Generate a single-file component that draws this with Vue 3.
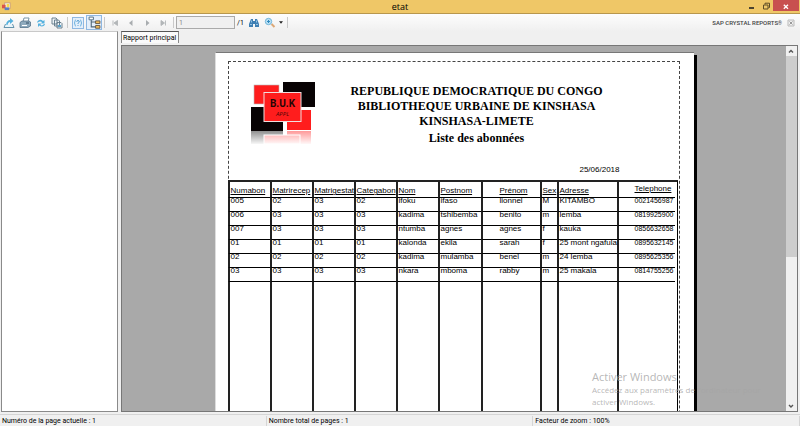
<script setup>
import { ref } from 'vue'

const page = ref('1')

const columns = [
  { key: 'numabon', label: 'Numabon', width: 42 },
  { key: 'matrirecep', label: 'Matrirecep', width: 42 },
  { key: 'matrigestat', label: 'Matrigestat', width: 42 },
  { key: 'categabon', label: 'Categabon', width: 42 },
  { key: 'nom', label: 'Nom', width: 42 },
  { key: 'postnom', label: 'Postnom', width: 43 },
  { key: 'prenom', label: 'Prénom', width: 59 },
  { key: 'sexe', label: 'Sex', width: 17 },
  { key: 'adresse', label: 'Adresse', width: 60 },
  { key: 'telephone', label: 'Telephone', width: 58 },
]

const rows = [
  ['005', '02', '03', '02', 'ifoku', 'ifaso', 'lionnel', 'M', 'KITAMBO', '0021456987'],
  ['006', '03', '03', '03', 'kadima', 'tshibemba', 'benito', 'm', 'lemba', '0819925900'],
  ['007', '03', '03', '03', 'ntumba', 'agnes', 'agnes', 'f', 'kauka', '0856632658'],
  ['01', '01', '01', '01', 'kalonda', 'ekila', 'sarah', 'f', '25 mont ngafula', '0895632145'],
  ['02', '02', '02', '02', 'kadima', 'mulamba', 'benel', 'm', '24 lemba', '0895625356'],
  ['03', '03', '03', '03', 'nkara', 'mboma', 'rabby', 'm', '25 makala', '0814755256'],
]
</script>

<template>
  <div class="window">
    <header class="titlebar">
      <svg class="app-icon" viewBox="0 0 10 10">
        <rect x="3" y="1" width="6" height="6" fill="#fff" stroke="#c79a7a" />
        <rect x="0" y="3" width="4" height="4" fill="#d9534a" />
        <rect x="5" y="2" width="3" height="4" fill="#f5d94e" />
        <rect x="3" y="6" width="5" height="3" fill="#5b7fc4" />
      </svg>
      <h1>etat</h1>
      <div class="controls">
        <button aria-label="Réduire"><svg viewBox="0 0 10 10"><path d="M3 7h5" stroke="#222" stroke-width="1.6" /></svg></button>
        <button aria-label="Restaurer"><svg viewBox="0 0 10 10"><path d="M2.5 4h4.5v4h-4.5zM4 3.500V2.200h4.500v4.300H7.500" fill="none" stroke="#5d4c26" /></svg></button>
        <button class="close" aria-label="Fermer"><svg viewBox="0 0 10 10"><path d="M2.800 3.800l4.200 4M7 3.800l-4.200 4" stroke="#fff" stroke-width="1.300" /></svg></button>
      </div>
    </header>

    <nav class="toolbar">
      <button aria-label="Exporter">
        <svg viewBox="0 0 12 12"><path d="M2.500 7L1 10.500h10L9.500 7" fill="#e8f4fa" stroke="#6594ad" /><path d="M3 7.500c.5-3 2-4.500 4-4.500V1l3.500 3L7 7V5C6 5 5 6 4.500 8z" fill="#55b1de" /></svg>
      </button>
      <button aria-label="Imprimer">
        <svg viewBox="0 0 12 12"><path d="M4 5l1-4h5L9 5" fill="#fff" stroke="#7894a6" /><path d="M1 5.500l2-1.500h7l1.500 1v4L9 10.500H1z" fill="#8faabd" stroke="#56748b" stroke-width=".8" /><path d="M3 8.500h5" stroke="#fff" /><path d="M7 6h3" stroke="#344e64" /></svg>
      </button>
      <button aria-label="Actualiser">
        <svg viewBox="0 0 12 12"><path d="M2 5.500C3 2.500 6 2 8 4l1.500-1v3.500H6L7 5C5.500 4 4 4.500 3 5.500zM10 7C9 10 6 10 4.500 8.500L3 10V6.500h3L5.500 8C7 9 8 8 9 7z" fill="#55b1de" /></svg>
      </button>
      <button aria-label="Copier">
        <svg viewBox="0 0 12 12"><path d="M1 1h4l1 1v5H1zM3.500 3h4l1 1v5h-5zM6 5.500h4l1 1V11H6z" fill="#edf3f6" stroke="#607787" stroke-width=".9" /><path d="M7 8h3v2H7z" fill="#5ca2c9" /></svg>
      </button>
      <span class="sep"></span>
      <button class="selected pale" aria-label="Paramètres">
        <svg viewBox="0 0 12 12"><path d="M3 2Q.5 6 3 10M9 2q2.500 4 0 8" fill="none" stroke="#58a6d7" /><path d="M4.500 4.500C4.500 2.500 7.500 2.500 7.500 4.500 7.500 5.500 6 5.500 6 7M6 8.500V9.500" fill="none" stroke="#378dc8" stroke-width="1.100" /></svg>
      </button>
      <button class="selected branch" aria-label="Arborescence du groupe">
        <svg viewBox="0 0 12 12"><path d="M3 3.500V10H7M3 5.500H7" fill="none" stroke="#4e6577" /><path d="M1 1h4v2.500H1z" fill="#fff" stroke="#55748a" stroke-width=".9" /><path d="M7 4.500h4V7H7zM7 8.800h4v2.500H7z" fill="#f5bd59" stroke="#685a48" stroke-width=".9" /></svg>
      </button>
      <span class="sep"></span>
      <button aria-label="Première page"><svg viewBox="0 0 12 12"><path d="M4 3.500v5M8.500 3.500v5L5 6z" fill="#b2b6b8" stroke="#b2b6b8" stroke-width=".9" /></svg></button>
      <button aria-label="Page précédente"><svg viewBox="0 0 12 12"><path d="M7.500 3v6L4 6z" fill="#a9adb0" /></svg></button>
      <button aria-label="Page suivante"><svg viewBox="0 0 12 12"><path d="M5 3v6l3.500-3z" fill="#a9adb0" /></svg></button>
      <button aria-label="Dernière page"><svg viewBox="0 0 12 12"><path d="M8.500 3.500v5M4 3.500v5L7.500 6z" fill="#b2b6b8" stroke="#b2b6b8" stroke-width=".9" /></svg></button>
      <span class="sep"></span>
      <input v-model="page" class="page-box" aria-label="Page" disabled />
      <span class="count">/1</span>
      <button aria-label="Rechercher">
        <svg viewBox="0 0 12 12"><path d="M3 2h2v2h2V2h2l2 5v3H7V7H5v3H1V7z" fill="#3f7fb3" /><path d="M2 7.500h2M8 7.500h2M3.500 3.500v2M8.500 3.500v2" stroke="#91c3e4" /></svg>
      </button>
      <button class="zoom" aria-label="Zoom">
        <svg viewBox="0 0 12 12"><path d="M7.500 7l3 3" stroke="#dba877" stroke-width="2" /><circle cx="4.500" cy="4.500" r="3.200" fill="#b9e0f4" stroke="#74b6da" /><path d="M3 4.500h3M4.500 3v3" stroke="#318bc0" /></svg>
        <svg class="caret" viewBox="0 0 5 3"><path d="M0 0h5L2.500 3z" fill="#222" /></svg>
      </button>
      <span class="sep"></span>
      <span class="brand">SAP CRYSTAL REPORTS<small>®</small></span>
      <button aria-label="Fermer la vue"><svg viewBox="0 0 12 12"><path d="M3 3h6v6H3z" fill="#eee" stroke="#bbb" /><path d="M4.500 4.500l3 3M7.500 4.500l-3 3" stroke="#999" /></svg></button>
    </nav>

    <main class="body">
      <aside class="tree"></aside>
      <section class="viewer">
        <div class="tabs"><button class="tab">Rapport principal</button></div>
        <div class="canvas">
          <div class="desk">
            <article class="sheet">
              <div class="frame">
                <div class="report-head">
                  <svg class="logo" viewBox="0 0 66 66">
                    <defs>
                      <linearGradient id="fade" x1="0" y1="0" x2="0" y2="1">
                        <stop offset="0" stop-color="#fff" stop-opacity=".5" />
                        <stop offset="1" stop-color="#fff" />
                      </linearGradient>
                    </defs>
                    <rect x="4" y="4" width="25" height="19" fill="#ff1d1d" stroke="#bbb" stroke-width=".6" />
                    <rect x="33" y="1" width="32" height="25" fill="#080304" />
                    <rect x="1" y="26" width="32" height="24" fill="#080304" />
                    <rect x="37" y="29" width="24" height="20" fill="#ff1d1d" />
                    <rect x="1" y="50" width="32" height="13" fill="#222" />
                    <rect x="37" y="50" width="24" height="13" fill="#ff3434" />
                    <rect x="14" y="54" width="36" height="9" fill="#ff4848" stroke="#fff" />
                    <rect x="0" y="50" width="66" height="14" fill="url(#fade)" />
                    <rect x="14" y="11.500" width="37" height="29" fill="#ff1d1d" stroke="#f1dede" />
                    <text x="32.500" y="26" class="logo-name">B.U.K</text>
                    <text x="32.500" y="35" class="logo-sub">APPL</text>
                  </svg>
                  <div class="titles">
                    <h2>REPUBLIQUE DEMOCRATIQUE DU CONGO<br />BIBLIOTHEQUE URBAINE DE KINSHASA<br />KINSHASA-LIMETE</h2>
                    <h3>Liste des abonnées</h3>
                  </div>
                </div>
                <p class="date">25/06/2018</p>
                <table>
                  <colgroup>
                    <col v-for="c in columns" :key="c.key" :style="{ width: c.width + 'px' }" />
                  </colgroup>
                  <thead>
                    <tr><th v-for="c in columns" :key="c.key" :class="c.key" scope="col">{{ c.label }}</th></tr>
                  </thead>
                  <tbody>
                    <tr v-for="r in rows" :key="r[0]">
                      <td v-for="(v, i) in r" :key="i" :class="columns[i].key">{{ v }}</td>
                    </tr>
                    <tr class="rest"><td v-for="c in columns" :key="c.key"></td></tr>
                  </tbody>
                </table>
              </div>
            </article>
          </div>
          <div class="scrollbar">
            <svg viewBox="0 0 10 10"><path d="M3 6.500l2-2 2 2" fill="none" stroke="#555" stroke-width="1.400" /></svg>
            <div class="thumb"></div>
            <svg viewBox="0 0 10 10"><path d="M3 4l2 2 2-2" fill="none" stroke="#555" stroke-width="1.400" /></svg>
          </div>
        </div>
      </section>
    </main>

    <footer class="status">
      <span>Numéro de la page actuelle : 1</span>
      <span>Nombre total de pages : 1</span>
      <span>Facteur de zoom : 100%</span>
    </footer>

    <div class="watermark">
      <strong>Activer Windows</strong>
      <p>Accédez aux paramètres de l'ordinateur pour<br />activer Windows.</p>
    </div>
  </div>
</template>

<style>
body {
  margin: 0;
}
</style>

<style scoped>
* {
  box-sizing: border-box;
}
button {
  border: 0;
  padding: 0;
  background: none;
  font: inherit;
  color: inherit;
}
.window {
  position: relative;
  display: flex;
  flex-direction: column;
  height: 100vh;
  overflow: hidden;
  background: #f0f0f0;
  font: 7px/10px Roboto, "Noto Sans", sans-serif;
  color: #000;
}
.titlebar {
  display: grid;
  grid-template-columns: 1fr auto 1fr;
  align-items: center;
  height: 14px;
  flex: none;
  background: #efc767;
  border-bottom: 1px solid #b8974d;
}
.app-icon {
  width: 9px;
  height: 9px;
  margin-left: 2px;
}
.titlebar h1 {
  margin: 0;
  font: 9px/12px "Open Sans", "Noto Sans", sans-serif;
}
.controls {
  display: flex;
  justify-content: flex-end;
  align-self: start;
}
.controls button {
  width: 15px;
  height: 11px;
  display: grid;
  place-items: center;
}
.controls svg {
  width: 10px;
  height: 10px;
}
.controls .close {
  width: 26px;
  margin-right: 1px;
  background: #c8504f;
}
.toolbar {
  display: flex;
  align-items: center;
  height: 17px;
  flex: none;
  padding: 0 1px;
  background: linear-gradient(#fdfdfd, #f0f0f0);
}
.toolbar button {
  width: 16px;
  height: 15px;
  display: flex;
  align-items: center;
  justify-content: center;
}
.toolbar svg {
  width: 12px;
  height: 12px;
  flex: none;
}
.toolbar .selected {
  background: #e4effb;
  border: 1px solid #8fb8e2;
}
.toolbar .branch svg {
  width: 13px;
  height: 13px;
}
.toolbar .pale {
  width: 12px;
  height: 12px;
  margin: 0 2px;
}
.toolbar .pale svg {
  width: 10px;
  height: 10px;
}
.sep {
  width: 1px;
  height: 11px;
  margin: 0 2px;
  background: #c9c9c9;
}
.page-box {
  width: 59px;
  height: 13px;
  padding: 0 2px;
  border: 1px solid #aaa;
  background: #f0f0f0;
  color: #888;
  font: inherit;
}
.count {
  width: 11px;
  text-align: center;
}
.toolbar .zoom {
  width: 23px;
  gap: 3px;
}
.toolbar .caret {
  width: 4px;
  height: 3px;
}
.brand {
  margin-left: auto;
  margin-right: 1px;
  font-size: 6px;
  font-weight: 500;
  color: #444;
}
.brand small {
  font-size: 5px;
}
.body {
  display: flex;
  flex: 1;
  min-height: 0;
  gap: 3px;
  padding: 0 2px 2px 1px;
}
.tree {
  width: 117px;
  flex: none;
  background: #fff;
  border: 1px solid #8a8a8a;
  border-top-color: #c9c9c9;
}
.viewer {
  flex: 1;
  min-width: 0;
  display: flex;
  flex-direction: column;
}
.tabs {
  display: flex;
  height: 14px;
  flex: none;
}
.tab {
  height: 12px;
  padding: 0 2px 0 1px;
  background: #fafafa;
  border-top: 1px solid #555;
  border-left: 1px solid #888;
  border-right: 1px solid #888;
}
.canvas {
  flex: 1;
  min-height: 0;
  display: flex;
  border: 1px solid #777;
  background: #a9a9a9;
}
.desk {
  flex: 1;
  overflow: hidden;
  display: flex;
  justify-content: center;
  align-items: flex-start;
  padding-top: 6px;
}
.sheet {
  width: 479px;
  flex: none;
  padding: 8px 14px 8px 12px;
  background: #fff;
  border-top: 1px solid #777;
  border-left: 1px solid #ddd;
  box-shadow: 3px 3px 0 #000;
}
.frame {
  border: 1px dashed #444;
}
.report-head {
  display: flex;
  padding: 19px 41px 0 21px;
}
.logo {
  width: 66px;
  height: 66px;
  flex: none;
}
.logo-name {
  font: bold 10px Roboto, sans-serif;
  text-anchor: middle;
  fill: #250505;
}
.logo-sub {
  font: italic 6px "Open Sans", sans-serif;
  text-anchor: middle;
  fill: #4a0606;
}
.titles {
  flex: 1;
  padding-top: 3px;
  text-align: center;
  white-space: nowrap;
  font-family: "Liberation Serif", "Times New Roman", serif;
}
.titles h2,
.titles h3 {
  margin: 0;
  font-size: 12px;
  line-height: 15px;
}
.titles h3 {
  margin-top: 2px;
}
.date {
  margin: 0;
  padding: 18px 59px 5px 0;
  text-align: right;
  font: 8px/10px "Liberation Sans", Arial, sans-serif;
}
table {
  width: 450px;
  margin-left: -1px;
  padding-right: 2px;
  table-layout: fixed;
  border-collapse: separate;
  border-spacing: 0;
  border-top: 2px solid #222;
  border-right: 1px solid #000;
  font: 8px/9px "Liberation Sans", Arial, sans-serif;
}
th,
td {
  padding: 0 0 0 1px;
  border-left: 2px solid #222;
  border-bottom: 1px solid #000;
  text-align: left;
  vertical-align: top;
  font-weight: 400;
  white-space: nowrap;
}
th {
  height: 16px;
  padding-top: 4px;
  text-decoration: underline;
  overflow: hidden;
}
td {
  height: 14px;
  line-height: 5px;
}
.prenom {
  padding-left: 17px;
}
.telephone {
  padding-left: 16px;
}
th.telephone {
  padding-top: 2px;
}
td.telephone {
  font-size: 7px;
}
.rest td {
  height: 360px;
}
.scrollbar {
  width: 11px;
  flex: none;
  display: flex;
  flex-direction: column;
  background: #f0f0f0;
}
.scrollbar svg {
  width: 10px;
  height: 10px;
  flex: none;
}
.scrollbar .thumb {
  height: 55%;
  margin-bottom: auto;
  background: #cdcdcd;
}
.status {
  display: grid;
  grid-template-columns: 1fr 1fr 1fr;
  align-items: center;
  height: 12px;
  flex: none;
  border-top: 1px solid #d5d5d5;
}
.status span {
  padding-left: 2px;
  border-right: 1px solid #d5d5d5;
}
.watermark {
  position: absolute;
  left: 592px;
  bottom: 18px;
  color: rgba(165, 165, 165, 0.8);
  font: 8px/12px "Open Sans", "Noto Sans", sans-serif;
  white-space: nowrap;
  pointer-events: none;
}
.watermark strong {
  font-size: 11px;
  font-weight: 400;
}
.watermark p {
  margin: 0;
}
</style>
